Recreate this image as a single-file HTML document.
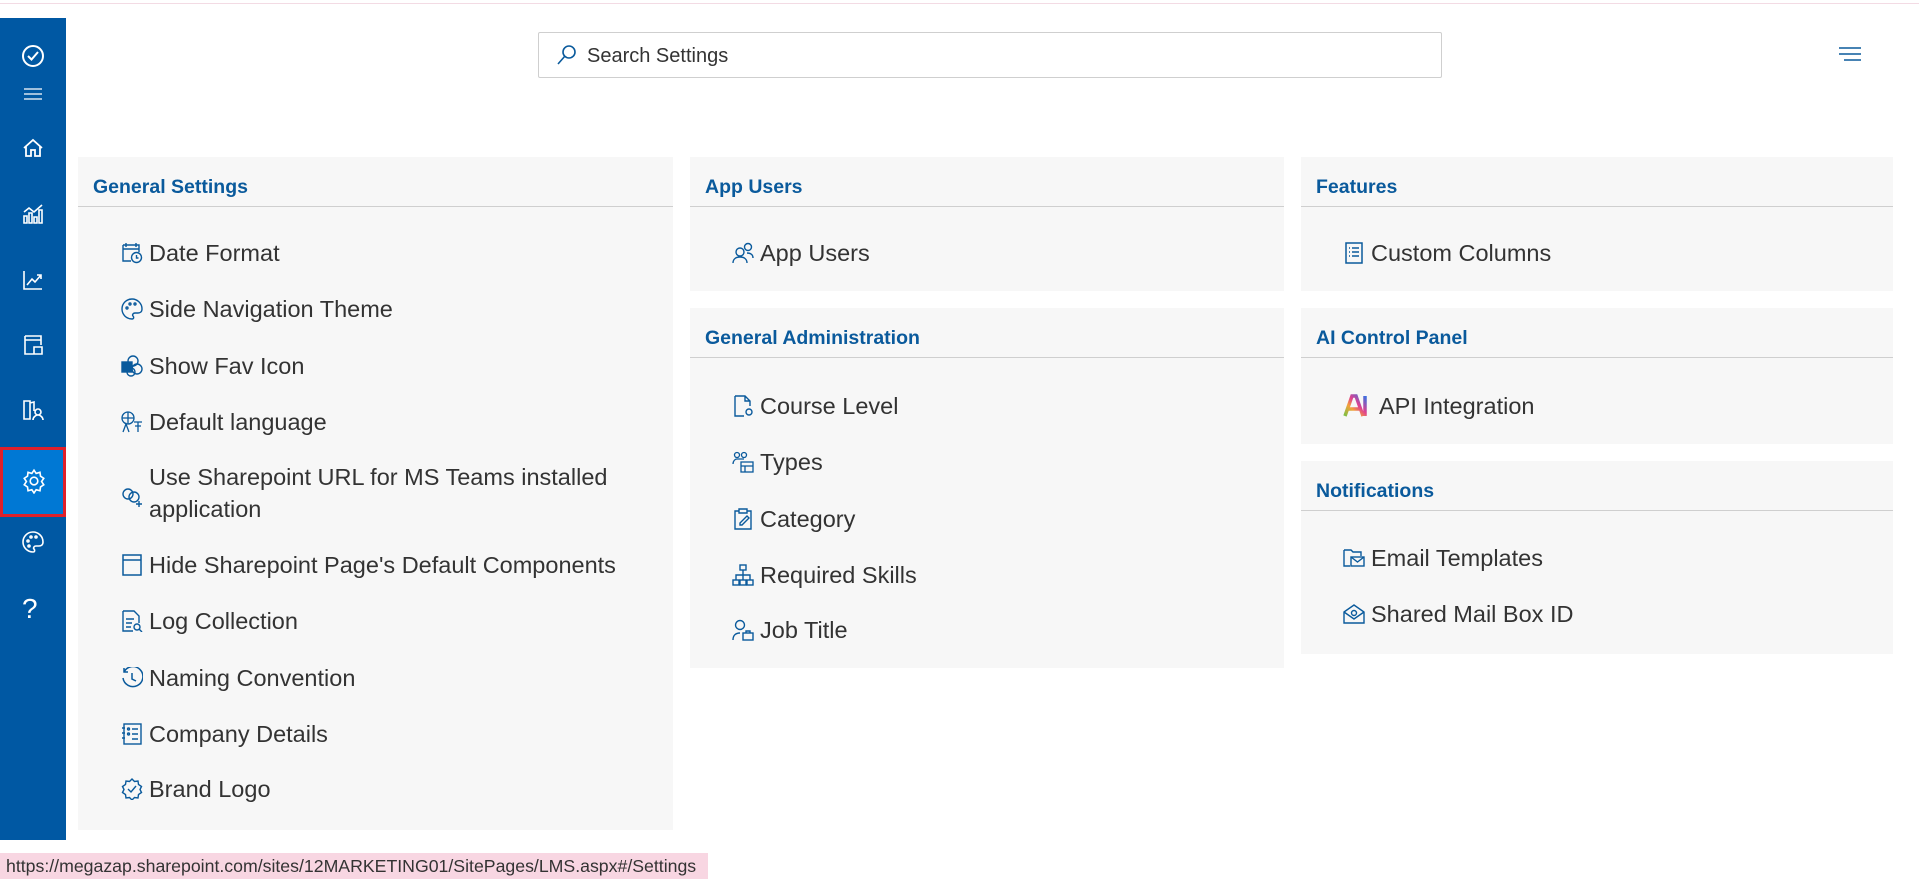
<!DOCTYPE html>
<html><head><meta charset="utf-8"><style>
*{margin:0;padding:0;box-sizing:border-box}
body{width:1919px;height:879px;position:relative;background:#fff;font-family:"Liberation Sans",sans-serif;overflow:hidden}
.topline{position:absolute;left:0;top:3px;width:1919px;height:1px;background:#f3dbe4}
.side{position:absolute;left:0;top:18px;width:66px;height:822px;background:#0058a3}
.ic{position:absolute;left:21px;width:24px;height:24px}
.sel{position:absolute;left:0;top:447px;width:66px;height:70px;background:#0078d4;border:3px solid #e0202a}
.search{position:absolute;left:538px;top:32px;width:904px;height:46px;border:1px solid #cfcfcf;border-radius:2px;background:#fff}
.search span{position:absolute;left:48px;top:12px;font-size:20px;color:#333}
.card{position:absolute;background:#f7f7f7}
.card h3{position:absolute;left:15px;top:19px;font-size:19.5px;font-weight:bold;color:#0a5a9c}
.card .hr{position:absolute;left:0;right:0;top:49px;height:1px;background:#cfcfcf}
.it{position:absolute;font-size:23.5px;color:#333;line-height:32px;white-space:nowrap;margin-top:2px}
.it svg{position:absolute;left:-28px;top:5px;width:22px;height:22px}
.status{position:absolute;left:0;top:853px;width:708px;height:26px;background:#f8d6e2;font-size:17.7px;color:#333;padding:3px 0 0 6px;white-space:nowrap}
</style></head><body>
<div class="topline"></div>
<div class="side">
<svg class="ic" style="top:26px" viewBox="0 0 24 24" fill="none" stroke="#fff" stroke-width="2"><circle cx="12" cy="12" r="10"/><path d="M7 12l3.5 3.5L17 8"/></svg>
<svg class="ic" style="top:64px" viewBox="0 0 24 24" fill="none" stroke="#fff" stroke-width="1.3"><path d="M3 7h18M3 12h18M3 17h18"/></svg>
<svg class="ic" style="top:118px" viewBox="0 0 24 24" fill="none" stroke="#fff" stroke-width="1.8"><path d="M3 12l9-8 9 8M5 10v10h5v-6h4v6h5V10"/></svg>
<svg class="ic" style="top:184px" viewBox="0 0 24 24" fill="none" stroke="#fff" stroke-width="1.6"><path d="M3 21h3v-7H3zM8 21h3v-10H8zM13 21h3v-6h-3zM18 21h3V8h-3zM3 10l5-4 5 4 8-7"/></svg>
<svg class="ic" style="top:250px" viewBox="0 0 24 24" fill="none" stroke="#fff" stroke-width="1.6"><path d="M3 3v18h18M6 17l5-6 3 3 6-7M16 7h4v4"/></svg>
<svg class="ic" style="top:315px" viewBox="0 0 24 24" fill="none" stroke="#fff" stroke-width="1.6"><path d="M4 3h16v9M4 3v18h9M4 7h16M13 14h8v7h-8z"/></svg>
<svg class="ic" style="top:380px" viewBox="0 0 24 24" fill="none" stroke="#fff" stroke-width="1.6"><path d="M3 3h6v18H3zM9 5l4-1v9M14 14a3 3 0 106 0 3 3 0 00-6 0M12 22c0-3 3-5 5-5s5 2 5 5"/></svg>
</div>
<div class="sel"><svg style="position:absolute;left:18px;top:18px;width:26px;height:26px" viewBox="0 0 24 24" fill="none" stroke="#fff" stroke-width="1.5"><circle cx="12" cy="12" r="3.5"/><path d="M12 2l2 3 3.5-1 .5 3.5 3 2-2 3 2 3-3 2-.5 3.5-3.5-1-2 3-2-3-3.5 1-.5-3.5-3-2 2-3-2-3 3-2 .5-3.5 3.5 1z"/></svg></div>
<svg class="ic" style="left:21px;top:530px;position:absolute;width:24px;height:24px" viewBox="0 0 24 24" fill="none" stroke="#fff" stroke-width="1.6"><path d="M12 2a10 10 0 100 20c2 0 2-2 1-3s0-3 2-3h3c2 0 4-1 4-4C22 6 17 2 12 2z"/><circle cx="7" cy="11" r="1"/><circle cx="10" cy="7" r="1"/><circle cx="15" cy="7" r="1"/><circle cx="8" cy="16" r="1"/></svg>
<div style="position:absolute;left:22px;top:593px;font-size:28px;color:#fff;font-weight:300">?</div>

<div class="search"><svg style="position:absolute;left:16px;top:10px;width:24px;height:24px" viewBox="0 0 24 24" fill="none" stroke="#0a5a9c" stroke-width="1.6"><circle cx="14" cy="9" r="6"/><path d="M10 13l-7 8"/></svg><span>Search Settings</span></div>
<svg style="position:absolute;left:1838px;top:46px;width:24px;height:18px" viewBox="0 0 24 18" fill="none" stroke="#0a5a9c" stroke-width="1.6"><path d="M1 2h22M1 8h22M6 14h17"/></svg>

<div class="card" style="left:78px;top:157px;width:595px;height:673px"><h3>General Settings</h3><div class="hr"></div></div>
<div class="card" style="left:690px;top:157px;width:594px;height:134px"><h3>App Users</h3><div class="hr"></div></div>
<div class="card" style="left:690px;top:308px;width:594px;height:360px"><h3>General Administration</h3><div class="hr"></div></div>
<div class="card" style="left:1301px;top:157px;width:592px;height:134px"><h3>Features</h3><div class="hr"></div></div>
<div class="card" style="left:1301px;top:308px;width:592px;height:136px"><h3>AI Control Panel</h3><div class="hr"></div></div>
<div class="card" style="left:1301px;top:461px;width:592px;height:193px"><h3>Notifications</h3><div class="hr"></div></div>

<div class="it" style="left:149px;top:235px"><svg viewBox="0 0 22 22" fill="none" stroke="#0a5a9c" stroke-width="1.4"><path d="M2 3h16v7M2 3v16h8M2 7h16M5 1v4M15 1v4"/><circle cx="15.5" cy="15.5" r="5"/><path d="M15.5 13v3h2"/></svg>Date Format</div>
<div class="it" style="left:149px;top:291px"><svg viewBox="0 0 22 22" fill="none" stroke="#0a5a9c" stroke-width="1.4"><path d="M11 1a10 10 0 100 20c2 0 2-2 1-3s0-3 2-3h3c2 0 4-1 4-4C21 5 16 1 11 1z"/><circle cx="6" cy="10" r="1"/><circle cx="9" cy="6" r="1"/><circle cx="14" cy="6" r="1"/></svg>Side Navigation Theme</div>
<div class="it" style="left:149px;top:348px"><svg viewBox="0 0 22 22" fill="none" stroke="#0a5a9c" stroke-width="1.4"><circle cx="12" cy="6" r="5"/><circle cx="16" cy="14" r="5"/><circle cx="10" cy="17" r="4"/><rect x="1" y="7" width="10" height="10" fill="#0a5a9c"/></svg>Show Fav Icon</div>
<div class="it" style="left:149px;top:404px"><svg viewBox="0 0 22 22" fill="none" stroke="#0a5a9c" stroke-width="1.3"><circle cx="7" cy="7" r="6"/><path d="M1 7h12M7 1v12M2 21l3-8 3 8M13 11h8M17 11v10M14 15h6"/></svg>Default language</div>
<div class="it" style="left:149px;top:459px;line-height:32px;white-space:normal;width:490px"><svg style="top:24px" viewBox="0 0 22 22" fill="none" stroke="#0a5a9c" stroke-width="1.4"><circle cx="7" cy="9" r="5"/><circle cx="13" cy="12" r="5"/><path d="M18 16v6M15 19h6"/></svg>Use Sharepoint URL for MS Teams installed application</div>
<div class="it" style="left:149px;top:547px"><svg viewBox="0 0 22 22" fill="none" stroke="#0a5a9c" stroke-width="1.5"><rect x="2" y="1" width="18" height="20"/><path d="M2 6h18"/></svg>Hide Sharepoint Page's Default Components</div>
<div class="it" style="left:149px;top:603px"><svg viewBox="0 0 22 22" fill="none" stroke="#0a5a9c" stroke-width="1.4"><path d="M2 1h11l5 5v7M2 1v20h10M5 9h8M5 13h6M5 17h5"/><circle cx="16" cy="17" r="3"/><path d="M18 19l3 3"/></svg>Log Collection</div>
<div class="it" style="left:149px;top:660px"><svg viewBox="0 0 22 22" fill="none" stroke="#0a5a9c" stroke-width="1.5"><path d="M3 5a10 10 0 11-1 6M3 1v4h4M11 6v6l4 2"/></svg>Naming Convention</div>
<div class="it" style="left:149px;top:716px"><svg viewBox="0 0 22 22" fill="none" stroke="#0a5a9c" stroke-width="1.4"><rect x="3" y="1" width="17" height="20"/><path d="M1 5h3M1 10h3M1 15h3M11 6h6M11 11h6M11 16h6"/><circle cx="7.5" cy="6" r="1"/><circle cx="7.5" cy="11" r="1"/></svg>Company Details</div>
<div class="it" style="left:149px;top:771px"><svg viewBox="0 0 22 22" fill="none" stroke="#0a5a9c" stroke-width="1.4"><path d="M11 1l2.5 2.5 3.5-.5.5 3.5 3 2-1.5 3 1.5 3-3 2-.5 3.5-3.5-.5L11 22l-2.5-2.5-3.5.5-.5-3.5-3-2 1.5-3-1.5-3 3-2 .5-3.5 3.5.5z"/><path d="M7 11l3 3 5-6"/></svg>Brand Logo</div>

<div class="it" style="left:760px;top:235px"><svg viewBox="0 0 22 22" fill="none" stroke="#0a5a9c" stroke-width="1.4"><circle cx="8" cy="10" r="4"/><path d="M1 21c0-4 3-6 7-6s7 2 7 6"/><circle cx="16" cy="5" r="3.5"/><path d="M15 11c4 0 6 2 6 5"/></svg>App Users</div>
<div class="it" style="left:760px;top:388px"><svg viewBox="0 0 22 22" fill="none" stroke="#0a5a9c" stroke-width="1.4"><path d="M3 1h10l5 5v5M3 1v20h9M13 1v5h5"/><circle cx="17" cy="17" r="3"/></svg>Course Level</div>
<div class="it" style="left:760px;top:444px"><svg viewBox="0 0 22 22" fill="none" stroke="#0a5a9c" stroke-width="1.3"><circle cx="5" cy="4" r="2.5"/><circle cx="12" cy="4" r="2.5"/><path d="M1 13c0-3 2-5 4-5h7"/><rect x="9" y="11" width="12" height="10"/><path d="M9 15h12M13 15v6"/></svg>Types</div>
<div class="it" style="left:760px;top:501px"><svg viewBox="0 0 22 22" fill="none" stroke="#0a5a9c" stroke-width="1.4"><path d="M7 3H3v18h16V3h-4M7 1h8v4H7z"/><path d="M8 15l7-7 2 2-7 7H8z"/></svg>Category</div>
<div class="it" style="left:760px;top:557px"><svg viewBox="0 0 22 22" fill="none" stroke="#0a5a9c" stroke-width="1.4"><rect x="8" y="1" width="6" height="5"/><rect x="1" y="16" width="6" height="5"/><rect x="8" y="16" width="6" height="5"/><rect x="15" y="16" width="6" height="5"/><path d="M11 6v10M4 16v-5h14v5"/></svg>Required Skills</div>
<div class="it" style="left:760px;top:612px"><svg viewBox="0 0 22 22" fill="none" stroke="#0a5a9c" stroke-width="1.4"><circle cx="8" cy="6" r="4.5"/><path d="M1 21c0-5 3-7 7-7"/><rect x="11" y="14" width="10" height="7"/><path d="M14 14v-2h4v2"/></svg>Job Title</div>

<div class="it" style="left:1371px;top:235px"><svg viewBox="0 0 22 22" fill="none" stroke="#0a5a9c" stroke-width="1.5"><rect x="3" y="1" width="16" height="20"/><path d="M6 6h1M9 6h7M6 10h1M9 10h7M6 14h1M9 14h7"/></svg>Custom Columns</div>
<div class="it" style="left:1379px;top:388px"><svg style="left:-36px;width:26px;height:24px;top:4px" viewBox="0 0 26 24"><defs><linearGradient id="g" x1="0" y1="1" x2="1" y2="0"><stop offset="0" stop-color="#7bc043"/><stop offset=".35" stop-color="#f4a23a"/><stop offset=".6" stop-color="#e0408f"/><stop offset="1" stop-color="#3b6fe0"/></linearGradient></defs><path d="M2 22L9 2h4l7 20M5 15h12M22 2v20" fill="none" stroke="url(#g)" stroke-width="3.5"/></svg>API Integration</div>
<div class="it" style="left:1371px;top:540px"><svg viewBox="0 0 22 22" fill="none" stroke="#0a5a9c" stroke-width="1.4"><path d="M1 3h7l2 2h8v4M1 3v16h6"/><rect x="8" y="10" width="13" height="9"/><path d="M8 10l6.5 5 6.5-5"/></svg>Email Templates</div>
<div class="it" style="left:1371px;top:596px"><svg viewBox="0 0 22 22" fill="none" stroke="#0a5a9c" stroke-width="1.4"><path d="M1 9l10-7 10 7v11H1z"/><path d="M1 9l10 7 10-7"/><circle cx="11" cy="10" r="2.5"/></svg>Shared Mail Box ID</div>

<div class="status">https://megazap.sharepoint.com/sites/12MARKETING01/SitePages/LMS.aspx#/Settings</div>
</body></html>
